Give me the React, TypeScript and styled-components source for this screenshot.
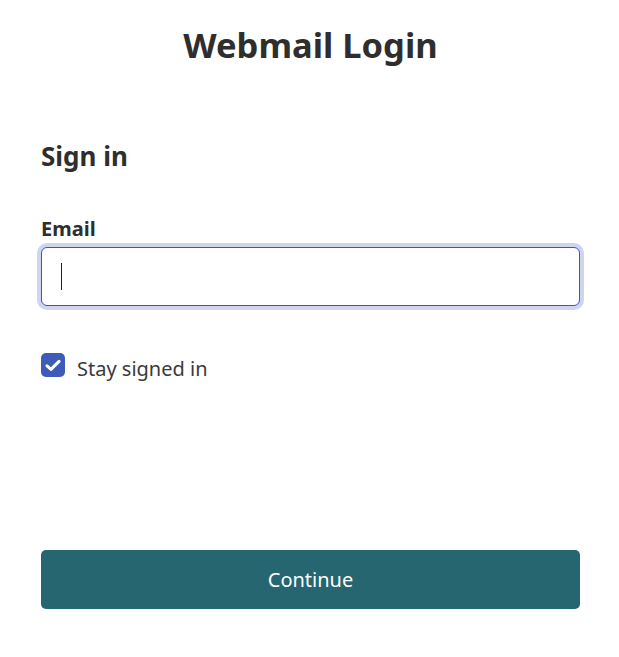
import styled, { createGlobalStyle } from "styled-components";
import { useState } from "react";

const GlobalStyle = createGlobalStyle`
  html, body {
    margin: 0;
    padding: 0;
    background: #ffffff;
  }
  body {
    font-family: "Noto Sans", "Open Sans", sans-serif;
    color: #2b2b2b;
  }
`;

const StyledPage = styled.div`
  display: flex;
  flex-direction: column;
  width: 539px;
  padding: 22px 0 0 41px;
`;

const StyledTitle = styled.h1`
  margin: 0;
  text-align: center;
  font-size: 34.5px;
  line-height: 46px;
  font-weight: 700;
  color: #2e2e2e;
`;

const StyledHeading = styled.h2`
  margin: 73px 0 0;
  font-size: 26px;
  line-height: 30px;
  font-weight: 700;
  color: #2e2e2e;
`;

const StyledLabel = styled.label`
  margin-top: 46px;
  font-size: 20px;
  line-height: 24px;
  font-weight: 700;
  color: #2e2e2e;
`;

const StyledInputWrap = styled.div`
  position: relative;
  margin-top: 6px;
`;

const StyledInput = styled.input`
  box-sizing: border-box;
  display: block;
  width: 100%;
  height: 59px;
  padding: 0 20px;
  border: 1px solid #3f57b7;
  border-radius: 6px;
  box-shadow: 0 0 0 4px #cfd5ef;
  font-family: inherit;
  font-size: 18px;
  color: #2e2e2e;
  caret-color: transparent;
  outline: none;
`;

const StyledCaret = styled.span`
  position: absolute;
  left: 20px;
  top: 16px;
  width: 1px;
  height: 27px;
  background-color: #1f1f1f;
  pointer-events: none;
`;

const StyledCheckRow = styled.label`
  display: flex;
  flex-direction: row;
  align-items: flex-start;
  gap: 12px;
  margin-top: 46px;
  cursor: pointer;
  user-select: none;
`;

const StyledBox = styled.span<{ $checked: boolean }>`
  display: flex;
  align-items: center;
  justify-content: center;
  flex-shrink: 0;
  width: 24px;
  height: 24px;
  margin-top: 1px;
  border-radius: 5px;
  box-sizing: border-box;
  background-color: ${(props) => (props.$checked ? "#3f5bb9" : "#ffffff")};
  border: ${(props) => (props.$checked ? "none" : "1px solid #777")};
`;

const StyledCheckText = styled.span`
  margin-top: 4px;
  font-size: 20px;
  line-height: 26px;
  color: #3a3a3a;
`;

const StyledButton = styled.button`
  margin-top: 168px;
  width: 100%;
  height: 59px;
  border: none;
  border-radius: 5px;
  background-color: #256670;
  color: #ffffff;
  font-family: inherit;
  font-size: 20px;
  cursor: pointer;
`;

const WebmailLogin = () => {
  const [email, setEmail] = useState<string>("");
  const [staySignedIn, setStaySignedIn] = useState<boolean>(true);

  return (
    <StyledPage>
      <StyledTitle>Webmail Login</StyledTitle>
      <StyledHeading>Sign in</StyledHeading>
      <StyledLabel htmlFor="email">Email</StyledLabel>
      <StyledInputWrap>
        <StyledInput
          id="email"
          type="email"
          value={email}
          onChange={(e) => setEmail(e.target.value)}
          autoFocus
        />
        {email === "" && <StyledCaret />}
      </StyledInputWrap>
      <StyledCheckRow onClick={() => setStaySignedIn(!staySignedIn)}>
        <StyledBox $checked={staySignedIn}>
          {staySignedIn && (
            <svg width="16" height="13" viewBox="0 0 16 13">
              <path
                d="M2 6.8 L6 10.4 L14 2.4"
                fill="none"
                stroke="#ffffff"
                strokeWidth="3"
                strokeLinecap="round"
                strokeLinejoin="round"
              />
            </svg>
          )}
        </StyledBox>
        <StyledCheckText>Stay signed in</StyledCheckText>
      </StyledCheckRow>
      <StyledButton>Continue</StyledButton>
    </StyledPage>
  );
};

const App = () => (
  <>
    <GlobalStyle />
    <WebmailLogin />
  </>
);

export default App;
